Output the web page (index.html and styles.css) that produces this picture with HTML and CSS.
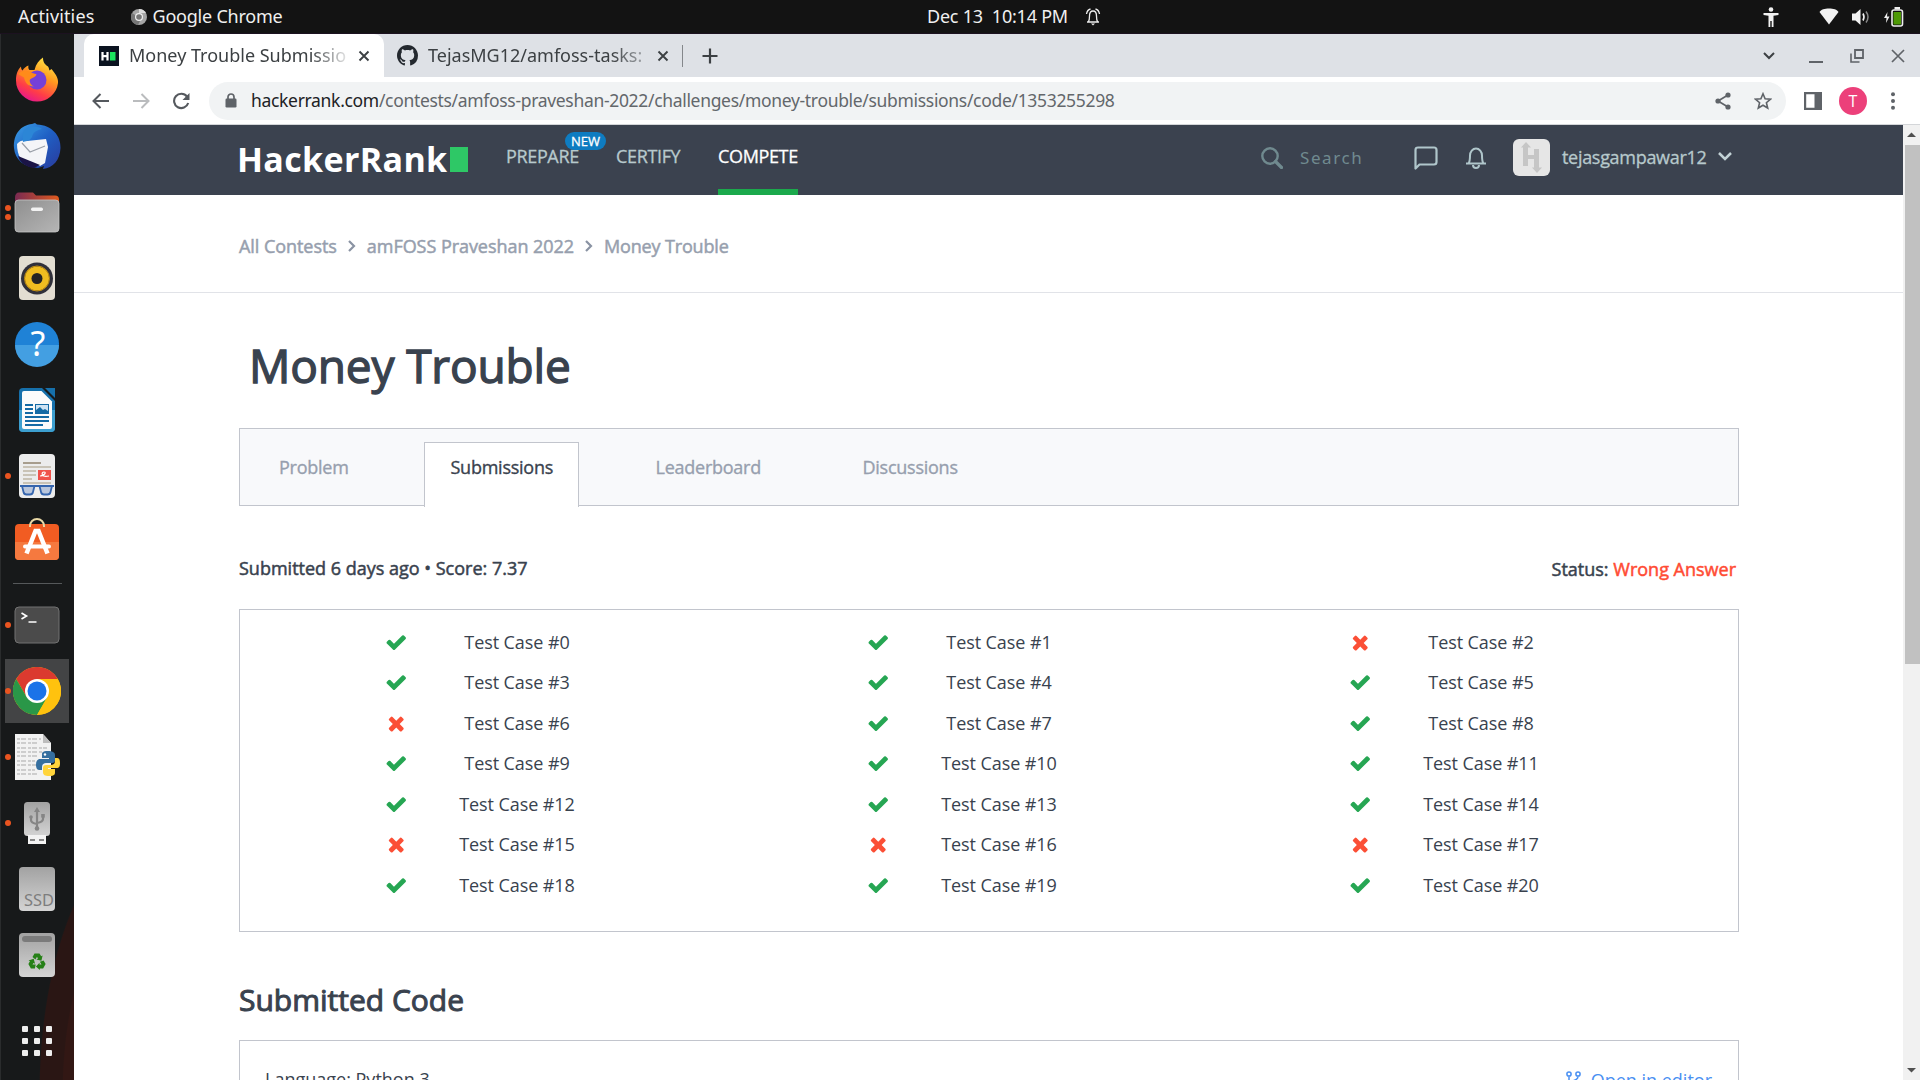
FILE: index.html
```html
<!DOCTYPE html>
<html lang="en">
<head>
<meta charset="utf-8">
<title>Money Trouble Submissions</title>
<link rel="stylesheet" href="styles.css">
</head>
<body>
<svg class="defs" width="0" height="0">
  <defs>
    <linearGradient id="ffx" x1=".8" y1="0" x2=".3" y2="1"><stop offset="0" stop-color="#fff04a"/><stop offset=".4" stop-color="#ff9a1f"/><stop offset=".75" stop-color="#ff3d47"/><stop offset="1" stop-color="#e5168f"/></linearGradient>
    <linearGradient id="tbd" x1="0" y1="0" x2="1" y2="1"><stop offset="0" stop-color="#3aa0e6"/><stop offset=".5" stop-color="#1f5fc4"/><stop offset="1" stop-color="#2a3a9c"/></linearGradient>
    <linearGradient id="fold" x1="0" y1="0" x2="1" y2="0"><stop offset="0" stop-color="#7a2a52"/><stop offset="1" stop-color="#e05a1e"/></linearGradient>
    <linearGradient id="grey" x1="0" y1="0" x2="0" y2="1"><stop offset="0" stop-color="#a2a2a2"/><stop offset="1" stop-color="#d4d4d4"/></linearGradient>
    <linearGradient id="greyd" x1="0" y1="0" x2="1" y2="1"><stop offset="0" stop-color="#8f8f8f"/><stop offset="1" stop-color="#b5b5b5"/></linearGradient>
    <symbol id="check" viewBox="0 0 1792 1792"><path d="M1671 566q0 40-28 68l-724 724-136 136q-28 28-68 28t-68-28l-136-136-362-362q-28-28-28-68t28-68l136-136q28-28 68-28t68 28l294 295 656-657q28-28 68-28t68 28l136 136q28 28 28 68z"/></symbol>
    <symbol id="cross" viewBox="0 0 1792 1792"><path d="M1490 1322q0 40-28 68l-136 136q-28 28-68 28t-68-28l-294-294-294 294q-28 28-68 28t-68-28l-136-136q-28-28-28-68t28-68l294-294-294-294q-28-28-28-68t28-68l136-136q28-28 68-28t68 28l294 294 294-294q28-28 68-28t68 28l136 136q28 28 28 68t-28 68l-294 294 294 294q28 28 28 68z"/></symbol>
  </defs>
</svg>

<header class="topbar">
  <div class="top-left">
    <span class="t-activities">Activities</span>
    <svg class="top-chrome" width="16" height="16" viewBox="0 0 16 16"><circle cx="8" cy="8" r="8" fill="#a5a5a5"/><path d="M8 0a8 8 0 0 1 7 4H8z" fill="#ddd"/><path d="M1 4a8 8 0 0 0 6 12l3-6z" fill="#777"/><circle cx="8" cy="8" r="4" fill="#f0f0f0"/><circle cx="8" cy="8" r="2.8" fill="#777"/></svg>
    <span class="t-app">Google Chrome</span>
  </div>
  <div class="top-mid">
    <span class="t-clock">Dec 13&nbsp; 10:14 PM</span>
    <svg width="16" height="18" viewBox="0 0 16 18" fill="none" stroke="#eee" stroke-width="1.3"><path d="M2 14h12M3.500 13.500c1-1.500 1-3 1-5.500C4.500 5 6 3 8 3s3.500 2 3.500 5c0 2.500 0 4 1 5.500M1.500 6C2 3 3.500 1.500 5.500 1M14.500 6C14 3 12.500 1.500 10.500 1"/><path d="M6 15.500h4l-2 2z" fill="#eee" stroke="none"/></svg>
  </div>
  <div class="top-right">
    <svg width="16" height="20" viewBox="0 0 16 20" fill="#f2f2f2"><circle cx="8" cy="2.500" r="2.300"/><path d="M.5 6h15v2l-5 .8V20H8.700v-6H7.300v6H5.500V8.800L.5 8z"/></svg>
    <svg class="wifi" width="20" height="17" viewBox="0 0 20 17" fill="#f2f2f2"><path d="M10 16.500L.5 4C3-.6 17-.6 19.500 4z"/></svg>
    <svg class="vol" width="19" height="18" viewBox="0 0 19 18" fill="#f2f2f2"><path d="M1 5.500h3.500L9.500 1v16l-5-4.500H1z"/><path d="M12 5.500q2 3.500 0 7" fill="none" stroke="#f2f2f2" stroke-width="1.600"/><path d="M15 3.500q4 5.500 0 11" fill="none" stroke="#888" stroke-width="1.500"/></svg>
    <svg width="21" height="20" viewBox="0 0 21 20"><path d="M4.500 5L1 11h2.500L3 16l3.500-6.500H4z" fill="#eee"/><rect x="9" y="3" width="10.500" height="16" rx="2" fill="#111" stroke="#eee" stroke-width="1.600"/><rect x="11.500" y="0" width="5.500" height="2.500" fill="#eee"/><rect x="10.500" y="5" width="7.500" height="12.500" fill="#4e9a06"/></svg>
  </div>
</header>

<div class="desktop">
  <nav class="dock">
    <div class="slot"><svg width="48" height="48" viewBox="0 0 48 48"><path d="M24 45.500A21 21 0 0 1 3 24.500C3 17 5 14 8 10.500c0 2 .5 3 1.500 4C11 12 13 10.500 15.500 9.500c-.5 2 0 3.500 1 4.500h5C23 8 26 4 30 1.500c0 5 2 7 5 9 1 1 1 3 1.500 4l2-1.500c5 6 7 10 6.500 14A21 21 0 0 1 24 45.500z" fill="url(#ffx)"/><circle cx="24" cy="24" r="9.500" fill="#7540d8"/><path d="M5 18c4-4 9-4 13-1.500 3 1.500 5 1 5.500 2-1 3-5 3.500-6.500 5-1 2 1 6 4 7-6 0-9-4-10-9z" fill="#ff8b1a"/></svg></div>
    <div class="slot"><svg width="48" height="48" viewBox="0 0 48 48"><path d="M1 26C0 12 8 3 19 2l3-1 2 1.500C39 3 48 14 47.500 26 47 38 40 46 30 47l1-3-6 2C11 45 2 38 1 26z" fill="url(#tbd)"/><path d="M4 22c3-4 7-4 10-3l19-2 2 8-3 16-5 3L8 37c-3-4-4-10-4-15z" fill="#f4f5f8"/><path d="M9 21l8 9 15-6" fill="none" stroke="#999fa8" stroke-width="1.200"/><path d="M27 43L5 34c2 7 8 11 16 12z" fill="#1b1446"/><path d="M11 8c6-5 15-4 18-1-5 1-9 3-10 8-3 5-7 4-9 5 0-3-1-7 1-12z" fill="#2c86d6"/></svg></div>
    <div class="slot d2"><svg width="48" height="48" viewBox="0 0 48 48"><path d="M2 10q0-5.500 4-5.500h14l3 3h19q4 0 4 4v12H2z" fill="url(#fold)"/><rect x="2" y="12" width="44" height="32" rx="3.500" fill="url(#greyd)" stroke="#c6c6c6" stroke-width=".8"/><rect x="18" y="19.500" width="12" height="3.500" rx="1.700" fill="#f2f2f2"/></svg></div>
    <div class="slot"><svg width="48" height="48" viewBox="0 0 48 48"><rect x="6" y="2" width="36" height="44" rx="4" fill="#e3ded2"/><circle cx="24" cy="24.500" r="16" fill="#30303a"/><circle cx="24" cy="24.500" r="12" fill="#f0bd20"/><circle cx="24" cy="24.500" r="12.500" fill="none" stroke="#c99310" stroke-width="1"/><circle cx="24" cy="24.500" r="5.500" fill="#242424"/></svg></div>
    <div class="slot"><svg width="48" height="48" viewBox="0 0 48 48"><circle cx="24" cy="24" r="22" fill="#1f82d6"/><path d="M2 25h44a22 22 0 0 1-44 0z" fill="#439fe2"/><text x="25" y="36" text-anchor="middle" class="g-help">?</text></svg></div>
    <div class="slot"><svg width="48" height="48" viewBox="0 0 48 48"><path d="M10 2h32v40q0 4-4 4H10q-4 0-4-4V6q0-4 4-4z" fill="#1670ab"/><path d="M6 24h36v18q0 4-4 4H10q-4 0-4-4z" fill="#3c9fcf"/><path d="M29 2l13 13V12L32 2z" fill="#17191a"/><path d="M11 5h17.500L39 15.500V41q0 2-2 2H11q-2 0-2-2V7q0-2 2-2z" fill="#fbfbfb"/><path d="M12 19h8M12 23h8M12 27h8M12 31h24M12 35h24M12 39h18" stroke="#146aa5" stroke-width="2.200"/><rect x="22.500" y="18.500" width="13" height="9" fill="#cfe3f3" stroke="#146aa5"/><path d="M23 27v-3l4-3 3 3 2-1 3 2v2z" fill="#146aa5"/></svg></div>
    <div class="slot d1"><svg width="48" height="48" viewBox="0 0 48 48"><rect x="6" y="2" width="36" height="44" rx="4" fill="#ececec"/><path d="M10 11h18" stroke="#a79d8d" stroke-width="2"/><path d="M10 15h28M10 19h13M10 23h13M10 27h9M10 31h28" stroke="#c9c3b6" stroke-width="2"/><rect x="25" y="18" width="13" height="10" fill="#f0524b"/><path d="M27 24c4 0 7-4 4-4s-3 6 5 4" fill="none" stroke="#fff" stroke-width="1.200"/><path d="M7 34h34" stroke="#3565ae" stroke-width="1.800"/><path d="M9 34h12.500l-1.500 6q-.5 2.500-3 2.500h-3.500q-2.500 0-3-2.500zM26.500 34H39l-1.500 6q-.5 2.500-3 2.500H31q-2.500 0-3-2.500z" fill="#b9c6dc" stroke="#3565ae" stroke-width="1.800"/></svg></div>
    <div class="slot"><svg width="48" height="48" viewBox="0 0 48 48"><rect x="2" y="6" width="44" height="36" rx="4" fill="#f15c22"/><path d="M2 24h44v14q0 4-4 4H6q-4 0-4-4z" fill="#f5793f"/><path d="M17 9V8a7 7 0 0 1 14 0v1" fill="none" stroke="#e9d9a6" stroke-width="2"/><path d="M13.500 35.500L22.500 13h3l9 22.500" fill="none" stroke="#fff" stroke-width="4.500"/><path d="M12 28.500h24" stroke="#fff" stroke-width="4" stroke-linecap="round"/></svg></div>
    <div class="rule"></div>
    <div class="slot d1"><svg width="48" height="48" viewBox="0 0 48 48"><rect x="2" y="6" width="44" height="36" rx="4" fill="#4b4b4b" stroke="#727272" stroke-width="1"/><path d="M8.500 12l5 3-5 3M15.500 21h8" fill="none" stroke="#fff" stroke-width="1.700"/></svg></div>
    <div class="slot d1 on"><svg width="48" height="48" viewBox="0 0 48 48"><circle cx="24" cy="24" r="24" fill="#ffc107"/><path d="M24 24V12h20.800A24 24 0 0 0 3.200 12l10.400 18z" fill="#db3a2f"/><path d="M3.200 12A24 24 0 0 0 24 48l10.400-18L24 24 13.600 30z" fill="#2a9748"/><path d="M44.800 12A24 24 0 0 1 24 48l10.400-18L31 12z" fill="#ffc20e"/><circle cx="24" cy="24" r="12" fill="#fff"/><circle cx="24" cy="24" r="9.500" fill="#1b73e8"/></svg></div>
    <div class="slot d1"><svg width="48" height="48" viewBox="0 0 48 48"><path d="M2 1h28l8 9v37H2z" fill="#f2f2f2"/><path d="M30 1l8 9h-8z" fill="#bdbdbd"/><path d="M4 6h24M4 10h22M4 15h30M4 19h26M4 23h20M4 28h18M4 32h20M4 37h18M4 41h20" stroke="#a9a9a9" stroke-width="1" stroke-dasharray="3 1 5 2"/><path d="M35 18c-6 0-6 2-6 4v3h7v1h-9c-3 0-4 3-4 6s1 5 3.500 5H29v-3c0-3 2-4 4-4h6c2 0 3-1 3-3v-5c0-3-3-4-7-4z" fill="#366f9f"/><path d="M36 43c6 0 6-2 6-4v-3h-7v-1h8.500c3 0 3.500-2 3.500-5 0-4-1-5-3.500-5H42v3c0 3-2 4-4 4h-5c-2 0-3 1-3 3v4c0 3 2 4 6 4z" fill="#ffd43b"/><circle cx="32" cy="21.500" r="1.200" fill="#fff"/></svg></div>
    <div class="slot d1"><svg width="48" height="48" viewBox="0 0 48 48"><rect x="11" y="3" width="26" height="34" rx="3.500" fill="url(#grey)"/><path d="M15 36h18v9H15z" fill="#f3f3f3"/><path d="M17 41h5M26 41h5" stroke="#888" stroke-width="2"/><path d="M24 11v18M18 18v3q0 3 6 4M30 17v3q0 3-6 4" fill="none" stroke="#858585" stroke-width="2.200"/><path d="M24 8l3 5h-6z" fill="#858585"/><circle cx="24" cy="29.500" r="2.300" fill="#858585"/><circle cx="18" cy="18" r="1.800" fill="#858585"/><path d="M28.200 15h3.600v3.600h-3.600z" fill="#858585"/></svg></div>
    <div class="slot"><svg width="48" height="48" viewBox="0 0 48 48"><rect x="6" y="2" width="36" height="44" rx="4" fill="url(#grey)"/><text x="11" y="40.500" textLength="30" lengthAdjust="spacingAndGlyphs" class="g-ssd">SSD</text></svg></div>
    <div class="slot"><svg width="48" height="48" viewBox="0 0 48 48"><rect x="6" y="2" width="36" height="44" rx="4" fill="url(#grey)"/><rect x="9" y="5" width="30" height="6" rx="3" fill="#7b7b7b"/><g fill="#268017"><path id="arm" d="M19.500 26l2-3.500h5l1.700 2.800 1.400-.8-1.200 5.200-5-1.300 1.600-.9-1-1.700-1.600 2.800z"/><use href="#arm" transform="rotate(120 24 31)"/><use href="#arm" transform="rotate(240 24 31)"/></g></svg></div>
    <div class="apps"><i></i><i></i><i></i><i></i><i></i><i></i><i></i><i></i><i></i></div>
  </nav>

  <div class="window">
    <div class="tabstrip">
      <div class="tab active">
        <svg width="20" height="20" viewBox="0 0 20 20"><rect width="20" height="20" fill="#0b1320"/><path d="M3.500 6v8.500M8.500 6v8.500M3.500 10.200h5" stroke="#fff" stroke-width="2.200"/><rect x="11" y="6" width="5.500" height="8.500" fill="#1be45f"/></svg>
        <span class="tab-title fade-a">Money Trouble Submissio</span>
        <svg class="x1" width="12" height="12" viewBox="0 0 12 12"><path d="M1.500 1.500l9 9M10.500 1.500l-9 9" stroke="#3c4043" stroke-width="1.900"/></svg>
      </div>
      <div class="tab">
        <svg width="21" height="21" viewBox="0 0 16 16" fill="#24292f"><path d="M8 0C3.580 0 0 3.580 0 8c0 3.540 2.290 6.530 5.470 7.590.4.070.55-.17.55-.38 0-.19-.01-.82-.01-1.490-2.010.37-2.530-.49-2.690-.94-.09-.23-.48-.94-.82-1.130-.28-.15-.68-.52-.01-.53.630-.010 1.080.580 1.230.820.720 1.210 1.870.870 2.330.660.070-.52.280-.870.510-1.070-1.780-.2-3.640-.890-3.640-3.950 0-.870.310-1.590.820-2.150-.080-.2-.360-1.020.080-2.120 0 0 .670-.210 2.200.820.640-.180 1.320-.270 2-.270s1.360.090 2 .270c1.530-1.040 2.200-.820 2.200-.820.440 1.100.160 1.920.080 2.120.510.560.820 1.270.820 2.150 0 3.070-1.870 3.750-3.650 3.950.290.250.540.730.540 1.480 0 1.070-.010 1.930-.010 2.200 0 .210.150.460.550.380A8.010 8.010 0 0 0 16 8c0-4.420-3.580-8-8-8z"/></svg>
        <span class="tab-title fade-b">TejasMG12/amfoss-tasks:</span>
        <svg class="x2" width="12" height="12" viewBox="0 0 12 12"><path d="M1.500 1.500l9 9M10.500 1.500l-9 9" stroke="#3c4043" stroke-width="1.900"/></svg>
      </div>
      <svg class="plus" width="16" height="16" viewBox="0 0 16 16"><path d="M8 .5v15M.5 8h15" stroke="#3c4043" stroke-width="2.200"/></svg>
      <div class="winctl">
        <svg width="12" height="8" viewBox="0 0 12 8"><path d="M1 1l5 5 5-5" fill="none" stroke="#3c4043" stroke-width="2"/></svg>
        <svg width="14" height="14" viewBox="0 0 14 14"><path d="M0 13h14" stroke="#5f6368" stroke-width="2"/></svg>
        <svg width="14" height="14" viewBox="0 0 14 14"><path d="M5 1h8v8H5z" fill="none" stroke="#5f6368" stroke-width="1.800"/><path d="M1 4.500V13h8.500" fill="none" stroke="#5f6368" stroke-width="1.600"/></svg>
        <svg width="14" height="14" viewBox="0 0 14 14"><path d="M1 1l12 12M13 1L1 13" stroke="#5f6368" stroke-width="1.700"/></svg>
      </div>
    </div>
    <div class="toolbar">
      <div class="navbtns">
        <svg width="18" height="16" viewBox="0 0 18 16" fill="none" stroke="#55595e" stroke-width="2"><path d="M17 8H2M8.500 1L1.500 8l7 7"/></svg>
        <svg width="18" height="16" viewBox="0 0 18 16" fill="none" stroke="#babcbe" stroke-width="2"><path d="M1 8h15M9.500 1l7 7-7 7"/></svg>
        <svg width="18" height="18" viewBox="0 0 18 18" fill="none" stroke="#55595e" stroke-width="2.100"><path d="M15 4.500A7.200 7.200 0 1 0 16.200 11"/><path d="M17.500 1v7h-7z" fill="#55595e" stroke="none"/></svg>
      </div>
      <div class="omnibox">
        <svg width="12" height="15" viewBox="0 0 12 15"><rect x=".5" y="5.500" width="11" height="9" rx="1.200" fill="#5f6368"/><path d="M3 6V4a3 3 0 0 1 6 0v2" fill="none" stroke="#5f6368" stroke-width="1.700"/></svg>
        <span class="t-url"><b>hackerrank.com</b>/contests/amfoss-praveshan-2022/challenges/money-trouble/submissions/code/1353255298</span>
        <svg class="share" width="16" height="18" viewBox="0 0 16 18" fill="#5f6368"><path d="M13 3L3 9l10 6" fill="none" stroke="#5f6368" stroke-width="1.700"/><circle cx="13" cy="3" r="2.600"/><circle cx="3" cy="9" r="2.600"/><circle cx="13" cy="15" r="2.600"/></svg>
        <svg width="18" height="18" viewBox="0 0 18 18"><path d="M9 1.800l2.100 5 5.400.4-4.100 3.500 1.300 5.300L9 13.200 4.300 16l1.300-5.300L1.500 7.200l5.400-.4z" fill="none" stroke="#5f6368" stroke-width="1.600"/></svg>
      </div>
      <svg class="panel" width="18" height="18" viewBox="0 0 18 18"><path d="M0 0h18v18H0zM2.200 2.200v13.600h8.300V2.200z" fill="#5f6368" fill-rule="evenodd"/></svg>
      <div class="profile">T</div>
      <svg class="dots" width="4" height="18" viewBox="0 0 4 18" fill="#5f6368"><circle cx="2" cy="2.200" r="2"/><circle cx="2" cy="9" r="2"/><circle cx="2" cy="15.800" r="2"/></svg>
    </div>

    <div class="viewport">
      <main class="page">
        <div class="hr-header">
          <div class="logo"><span class="t-logo">HackerRank</span><i></i></div>
          <nav class="hr-nav">
            <a class="n1">PREPARE<em>NEW</em></a>
            <a class="n2">CERTIFY</a>
            <a class="n3">COMPETE</a>
          </nav>
          <div class="hr-tools">
            <svg width="22" height="22" viewBox="0 0 22 22" fill="none" stroke="#708a8f"><circle cx="9" cy="9" r="7.700" stroke-width="2.400"/><path d="M14.500 14.500l6 6" stroke-width="3.200" stroke-linecap="round"/></svg>
            <span class="t-search">Search</span>
            <svg class="chat" width="24" height="24" viewBox="0 0 24 24" fill="none" stroke="#b0c6cb" stroke-width="2.200"><path d="M1.500 22.500V4q0-2.500 2.500-2.500h16q2.500 0 2.500 2.500v12q0 2.500-2.500 2.500H5.500z" stroke-linejoin="round"/></svg>
            <svg class="bell" width="22" height="22" viewBox="0 0 22 22" fill="none" stroke="#b0c6cb" stroke-width="2"><path d="M1 16.500h20M3.500 16.500q1.500-2 1.500-8a6 7 0 0 1 12 0q0 6 1.500 8M8 18a3 3 0 0 0 6 0"/></svg>
            <svg class="avatar" width="37" height="37" viewBox="0 0 37 37"><rect width="37" height="37" rx="6" fill="#e6e6e6"/><path d="M13 3l5 5.500h-3V16h6V10h5v18.500h3L24 34l-5-5.500h2V20h-6v7h-5V8.500H8z" fill="#c6c6c6"/></svg>
            <span class="t-user">tejasgampawar12</span>
            <svg class="chev" width="14" height="9" viewBox="0 0 14 9"><path d="M1 1l6 6 6-6" fill="none" stroke="#c3d2d6" stroke-width="2.500"/></svg>
          </div>
        </div>
        <div class="crumbs">
          <span>All Contests</span>
          <svg width="8" height="12" viewBox="0 0 8 12"><path d="M1 1l5 5-5 5" fill="none" stroke="#8a93a3" stroke-width="2.200"/></svg>
          <span>amFOSS Praveshan 2022</span>
          <svg width="8" height="12" viewBox="0 0 8 12"><path d="M1 1l5 5-5 5" fill="none" stroke="#8a93a3" stroke-width="2.200"/></svg>
          <span class="t-c3">Money Trouble</span>
        </div>
        <div class="content">
          <h1>Money Trouble</h1>
          <div class="tabs">
            <a class="p1">Problem</a>
            <a class="p2">Submissions</a>
            <a class="p3">Leaderboard</a>
            <a class="p4">Discussions</a>
          </div>
          <div class="meta">
            <span class="t-sub">Submitted 6 days ago • Score: 7.37</span>
            <span class="t-status">Status: <em>Wrong Answer</em></span>
          </div>
          <div class="cases">
            <div class="case"><svg class="ok"><use href="#check"/></svg><span>Test Case #0</span></div>
            <div class="case"><svg class="ok"><use href="#check"/></svg><span>Test Case #1</span></div>
            <div class="case"><svg class="no"><use href="#cross"/></svg><span>Test Case #2</span></div>
            <div class="case"><svg class="ok"><use href="#check"/></svg><span>Test Case #3</span></div>
            <div class="case"><svg class="ok"><use href="#check"/></svg><span>Test Case #4</span></div>
            <div class="case"><svg class="ok"><use href="#check"/></svg><span>Test Case #5</span></div>
            <div class="case"><svg class="no"><use href="#cross"/></svg><span>Test Case #6</span></div>
            <div class="case"><svg class="ok"><use href="#check"/></svg><span>Test Case #7</span></div>
            <div class="case"><svg class="ok"><use href="#check"/></svg><span>Test Case #8</span></div>
            <div class="case"><svg class="ok"><use href="#check"/></svg><span>Test Case #9</span></div>
            <div class="case"><svg class="ok"><use href="#check"/></svg><span>Test Case #10</span></div>
            <div class="case"><svg class="ok"><use href="#check"/></svg><span>Test Case #11</span></div>
            <div class="case"><svg class="ok"><use href="#check"/></svg><span>Test Case #12</span></div>
            <div class="case"><svg class="ok"><use href="#check"/></svg><span>Test Case #13</span></div>
            <div class="case"><svg class="ok"><use href="#check"/></svg><span>Test Case #14</span></div>
            <div class="case"><svg class="no"><use href="#cross"/></svg><span>Test Case #15</span></div>
            <div class="case"><svg class="no"><use href="#cross"/></svg><span>Test Case #16</span></div>
            <div class="case"><svg class="no"><use href="#cross"/></svg><span>Test Case #17</span></div>
            <div class="case"><svg class="ok"><use href="#check"/></svg><span>Test Case #18</span></div>
            <div class="case"><svg class="ok"><use href="#check"/></svg><span>Test Case #19</span></div>
            <div class="case"><svg class="ok"><use href="#check"/></svg><span>Test Case #20</span></div>
          </div>
          <h2>Submitted Code</h2>
          <div class="code">
            <span class="t-lang">Language: Python 3</span>
            <span class="open"><svg width="15" height="18" viewBox="0 0 15 18" fill="none" stroke="#4a90f2" stroke-width="1.500"><circle cx="3" cy="3" r="2.100"/><circle cx="12" cy="3" r="2.100"/><path d="M3 5.500v8M12 5.500q0 4-9 5"/></svg><span>Open in editor</span></span>
          </div>
        </div>
      </main>
      <div class="scroll">
        <svg width="17" height="20" viewBox="0 0 17 20"><path d="M4 12h9L8.500 7.500z" fill="#505050"/></svg>
        <div class="thumb"></div>
        <svg class="down" width="17" height="18" viewBox="0 0 17 18"><path d="M4 6h9l-4.500 4.500z" fill="#505050"/></svg>
      </div>
    </div>
  </div>
</div>
</body>
</html>
```
FILE: styles.css
```css
* { box-sizing: border-box; }
body { margin: 0; width: 1920px; height: 1080px; overflow: hidden; display: flex; flex-direction: column; background: #17191a; font-family: "Open Sans", "Noto Sans", sans-serif; }
svg { display: block; flex: none; }
span { white-space: nowrap; }
em { font-style: normal; }
.defs { position: absolute; }

.topbar { height: 34px; background: #131313; color: #f0f0f0; font: 18px/33px "Noto Sans", sans-serif; display: grid; grid-template-columns: 927px 700px 1fr; border-bottom: 1px solid #1c1220; }
.top-left, .top-mid, .top-right { display: flex; align-items: center; }
.top-left { padding-left: 18px; }
.t-activities { letter-spacing: .15px; }
.top-chrome { margin: 0 6px 0 36px; }
.t-app, .t-clock { letter-spacing: -.22px; }
.top-mid { gap: 17px; }
.top-right { justify-content: flex-end; padding-right: 16px; }
.wifi { margin-left: 40px; }
.vol { margin: 0 13px 0 12px; }

.desktop { flex: 1; display: flex; min-height: 0; }
.dock { width: 74px; padding-top: 13px; border-left: 1px solid #2a2c2d; background: radial-gradient(ellipse 110px 260px at 148px 1060px, #321714 0 78%, #2a1614 79% 99%, #17191a 100%); display: flex; flex-direction: column; }
.slot { height: 66px; margin-right: 1px; flex: none; display: flex; align-items: center; justify-content: center; position: relative; }
.slot.on { background: #434445; margin: 1px 5px 1px 4px; height: 64px; }
.slot.d1::before, .slot.d2::before { content: ""; position: absolute; left: 4px; top: 30px; width: 6px; height: 6px; border-radius: 3px; background: #e95420; }
.slot.on::before { left: 0; top: 29px; }
.slot.d2::before { top: 26px; box-shadow: 0 9px #e95420; }
.rule { height: 1px; margin: 8px 12px; background: #55585a; flex: none; }
.g-help { font: 34px "Noto Sans", sans-serif; fill: #fff; }
.g-ssd { font: 16px "Noto Sans", sans-serif; fill: #7d7d7d; }
.apps { display: grid; grid-template-columns: repeat(3, 6px); gap: 6px; margin: 38px 0 0 21px; }
.apps i { width: 6px; height: 6px; border-radius: 1px; background: #eee; }

.window { flex: 1; display: flex; flex-direction: column; min-width: 0; background: #fff; }
.tabstrip { height: 43px; background: #dee1e6; display: flex; align-items: center; padding-left: 10px; color: #3c4043; font: 18px/24px "Noto Sans", sans-serif; }
.tab { height: 43px; display: flex; align-items: center; padding-left: 13px; }
.tab.active { width: 300px; padding-left: 15px; background: #fff; border-radius: 10px 10px 0 0; }
.tab:not(.active) { width: 299px; border-right: 1px solid #84878b; height: 22px; }
.tab-title { overflow: hidden; padding-bottom: 2px; }
.fade-a { margin-left: 10px; width: 221px; mask-image: linear-gradient(90deg, #000 82%, transparent 101%); }
.fade-b { margin-left: 10px; width: 218px; mask-image: linear-gradient(90deg, #000 84%, #0006 98%); }
.x1 { margin-left: 8px; }
.x2 { margin-left: 11px; }
.plus { margin-left: 19px; }
.winctl { margin-left: auto; padding-right: 15px; display: flex; align-items: center; gap: 27px; }
.winctl svg:first-child { margin-right: 7px; }
.toolbar { height: 48px; border-bottom: 1px solid #d4d6d9; display: flex; align-items: center; }
.navbtns { width: 135px; padding-left: 18px; display: flex; gap: 22px; align-items: center; }
.omnibox { width: 1577px; height: 38px; border-radius: 19px; background: #f1f3f4; display: flex; align-items: center; padding: 0 14px 0 16px; color: #63676b; font: 17.5px/24px "Noto Sans", sans-serif; }
.t-url { margin-left: 14px; padding-bottom: 1px; letter-spacing: -.32px; }
.t-url b { font-weight: 400; color: #202124; }
.share { margin-left: auto; margin-right: 23px; }
.panel { margin-left: 18px; }
.profile { width: 28px; height: 28px; border-radius: 50%; background: #ec407a; color: #fff; font-size: 16px; line-height: 28px; text-align: center; margin-left: 17px; }
.dots { margin-left: 24px; }

.viewport { flex: 1; display: flex; min-height: 0; }
.page { flex: 1; min-width: 0; overflow: hidden; }
.scroll { width: 17px; background: #f1f1f1; display: flex; flex-direction: column; }
.thumb { height: 519px; margin: 0 0 0 2px; background: #c1c1c1; }
.down { margin-top: auto; }

.hr-header { height: 70px; background: #3b424f; padding-left: 164px; display: flex; color: #b7c9cc; font-size: 18px; }
.logo { width: 268px; height: 69px; display: flex; align-items: center; color: #fff; font: 700 34px/69px "Open Sans", sans-serif; }
.t-logo { width: 209px; margin-left: -1px; letter-spacing: .35px; }
.logo i { width: 18px; height: 25px; margin-left: 4px; background: #2ec866; }
.hr-nav { display: flex; width: 755px; line-height: 62px; letter-spacing: -.35px; -webkit-text-stroke: .3px; }
.hr-nav a { display: block; position: relative; height: 70px; }
.n1 { width: 110px; }
.n2 { width: 102px; }
.n3 { width: 80px; color: #fff; border-bottom: 6px solid #1ba94c; }
.n1 em { position: absolute; left: 59px; top: 7px; width: 41px; height: 18px; border-radius: 9px; background: #0e7cc1; color: #fff; font-size: 13px; line-height: 18px; text-align: center; letter-spacing: 0; }
.hr-tools { display: flex; align-items: center; padding-bottom: 4px; }
.t-search { margin-left: 17px; width: 114px; font: 17px/24px "Noto Sans", sans-serif; color: #708a8f; letter-spacing: 1.6px; }
.bell { margin-left: 27px; }
.avatar { margin: 0 12px 2px 26px; }
.t-user { width: 156px; padding-bottom: 3px; letter-spacing: -.3px; -webkit-text-stroke: .3px; }
.chev { margin-bottom: 4px; }

.crumbs { height: 98px; padding: 4px 0 0 165px; border-bottom: 1px solid #e1e3e8; display: flex; align-items: center; gap: 11px; color: #979fae; font-size: 18px; letter-spacing: -.05px; -webkit-text-stroke: .5px; }
.t-c3 { letter-spacing: -.15px; }
.content { width: 1500px; margin-left: 165px; color: #39424e; font-size: 18px; }
h1 { margin: 0; padding: 39px 0 0 10px; height: 135px; font: 400 46px/66px "Open Sans", sans-serif; letter-spacing: -.15px; -webkit-text-stroke: 1.3px; }
.tabs { height: 78px; border: 1px solid #c2c5cd; background: #f8f9fb; display: flex; color: #979fae; letter-spacing: -.25px; -webkit-text-stroke: .35px; }
.tabs a { line-height: 77px; }
.p1 { width: 184px; padding-left: 39px; }
.tabs .p2 { width: 155px; height: 65px; margin-top: 13px; padding-left: 25.5px; line-height: 49px; background: #fff; border: 1px solid #c2c5cd; border-bottom: 0; color: #39424e; }
.p3 { width: 207px; margin-left: 76.5px; }
.meta { height: 103px; padding: 23px 3px 0 0; display: flex; justify-content: space-between; align-items: center; line-height: 24px; -webkit-text-stroke: .5px; }
.meta em { color: #ff4b33; }
.t-sub { padding-bottom: 2px; }
.cases { height: 323px; border: 1px solid #c2c5cd; display: grid; grid-template-columns: repeat(3, 482px); grid-auto-rows: 40.5px; padding-top: 11.5px; }
.case { padding-left: 106.5px; display: flex; align-items: center; letter-spacing: -.08px; }
.case svg { width: 22.5px; height: 22.5px; margin: 0 39.5px 0 38.5px; }
.case span { width: 140px; text-align: center; }
.ok { fill: #26a653; }
.no { fill: #fb4f36; }
h2 { margin: 0; height: 108px; padding-top: 46px; font: 400 30px/44px "Open Sans", sans-serif; -webkit-text-stroke: 1px; }
.code { height: 120px; border: 1px solid #c2c5cd; padding: 26px 26px 0 25px; display: flex; justify-content: space-between; line-height: 24px; }
.open { display: flex; gap: 10px; color: #4a90f2; height: 26px; align-items: center; }
```
